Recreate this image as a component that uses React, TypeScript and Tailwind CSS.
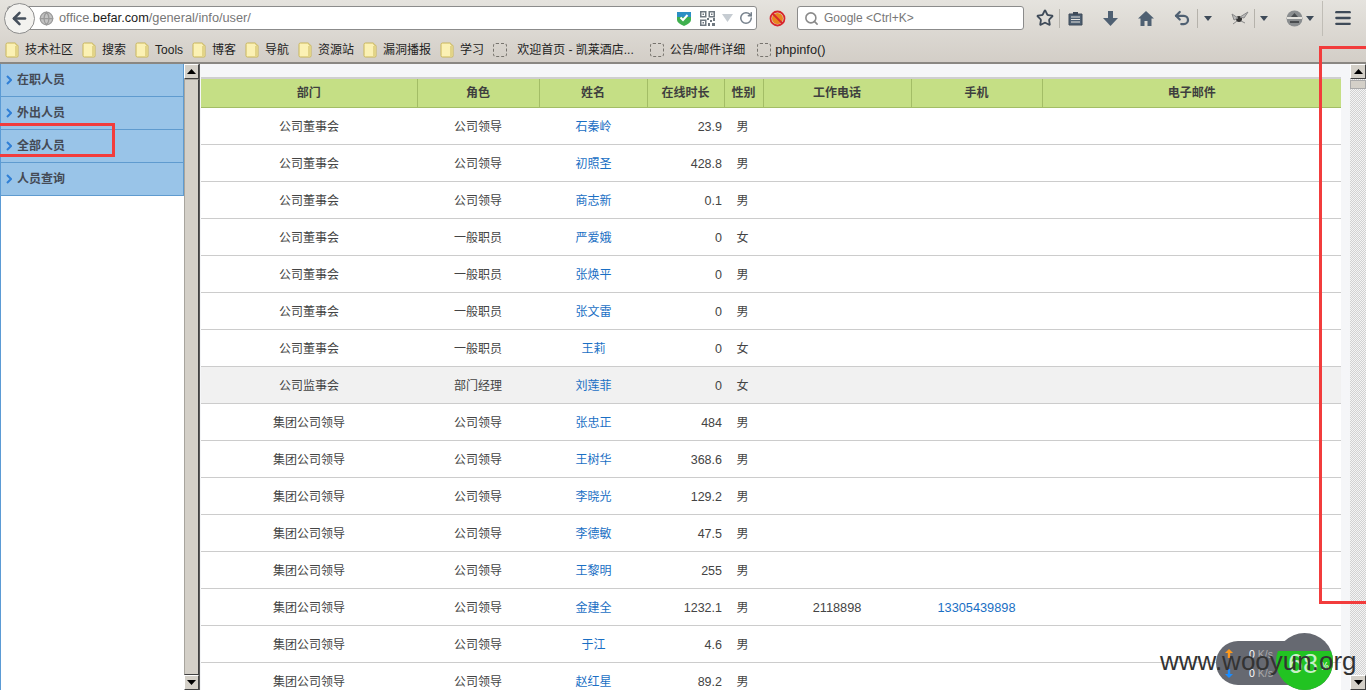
import React from "react";
import { ArrowLeft, Globe, Menu, RotateCw, Search, Star, Undo2 } from "lucide-react";

const bookmarks = ["技术社区", "搜索", "Tools", "博客", "导航", "资源站", "漏洞播报", "学习"];
const pages = ["欢迎首页 - 凯莱酒店...", "公告/邮件详细", "phpinfo()"];
const menu = ["在职人员", "外出人员", "全部人员", "人员查询"];
const heads = ["部门", "角色", "姓名", "在线时长", "性别", "工作电话", "手机", "电子邮件"];

const rows = [
  ["公司董事会", "公司领导", "石秦岭", "23.9", "男"],
  ["公司董事会", "公司领导", "初照圣", "428.8", "男"],
  ["公司董事会", "公司领导", "商志新", "0.1", "男"],
  ["公司董事会", "一般职员", "严爱娥", "0", "女"],
  ["公司董事会", "一般职员", "张焕平", "0", "男"],
  ["公司董事会", "一般职员", "张文雷", "0", "男"],
  ["公司董事会", "一般职员", "王莉", "0", "女"],
  ["公司监事会", "部门经理", "刘莲菲", "0", "女"],
  ["集团公司领导", "公司领导", "张忠正", "484", "男"],
  ["集团公司领导", "公司领导", "王树华", "368.6", "男"],
  ["集团公司领导", "公司领导", "李晓光", "129.2", "男"],
  ["集团公司领导", "公司领导", "李德敏", "47.5", "男"],
  ["集团公司领导", "公司领导", "王黎明", "255", "男"],
  ["集团公司领导", "公司领导", "金建全", "1232.1", "男", "2118898", "13305439898"],
  ["集团公司领导", "公司领导", "于江", "4.6", "男"],
  ["集团公司领导", "公司领导", "赵红星", "89.2", "男"],
];

const Folder = () => (
  <svg width="14" height="16" viewBox="0 0 14 16" className="shrink-0">
    <path d="M1 2.5 Q1 1 2.5 1 H10 Q11 1 11 2.5 V3 H12 Q13 3 13 4 V14 Q13 15 12 15 H2.5 Q1 15 1 13.5 Z" fill="#fbf1b4" stroke="#c9b65a" />
    <path d="M11 4 V14" stroke="#c9b65a" />
  </svg>
);

const Dashed = () => (
  <span className="w-[14px] h-[14px] shrink-0 rounded-[3px] border border-dashed border-[#77746e]" />
);

const Caret = () => (
  <svg width="8" height="5" viewBox="0 0 8 5" className="shrink-0">
    <path d="M0 0 H8 L4 5 Z" fill="#3e4a58" />
  </svg>
);

const Sep = () => <span className="block w-px h-[19px] bg-[#b5b2ab]" />;

const Arrow = ({ down }: { down?: boolean }) => (
  <svg width="9" height="5" viewBox="0 0 9 5">
    <path d={down ? "M0 0 H9 L4.5 5 Z" : "M0 5 H9 L4.5 0 Z"} fill="#000" />
  </svg>
);

const ScrollBtn = ({ down }: { down?: boolean }) => (
  <div className="h-[15px] w-full shrink-0 flex items-center justify-center bg-[#d4d0c8] border-t border-l border-t-white border-l-white border-r border-b border-r-[#404040] border-b-[#404040]">
    <Arrow down={down} />
  </div>
);

function Toolbar() {
  return (
    <div className="h-[36px] flex items-center pl-[4px] pr-[8px]">
      <div className="relative flex items-center w-[750px] h-[24px] ml-[3px] bg-white border border-[#8b8b8b] rounded-[3px]">
        <div className="absolute -left-[4px] -top-[4px] w-[31px] h-[31px] rounded-full bg-[#f3f2ef] border border-[#8d8d8d] flex items-center justify-center">
          <ArrowLeft size={19} strokeWidth={3.2} color="#46505c" />
        </div>
        <Globe size={15} color="#9a9a9a" fill="#c4c4c4" className="ml-[31px]" />
        <span className="ml-[5px] text-[12.75px] text-[#777]">
          office.<span className="text-[#1c1c1c]">befar.com</span>/general/info/user/
        </span>
        <div className="ml-auto flex items-center mr-[3px]">
          <svg width="14" height="15" viewBox="0 0 14 15">
            <path d="M0 1 H14 V9 Q14 12 7 15 Q0 12 0 9 Z" fill="#3fb04f" />
            <path d="M0 1 H14 V6 H0 Z" fill="#2b8fc4" />
            <path d="M3.5 6.5 L6 9 L10.5 4" stroke="#fff" strokeWidth="2" fill="none" />
          </svg>
          <svg width="15" height="15" viewBox="0 0 15 15" className="ml-[9px]">
            <path d="M.75.75h5v5h-5zM9.25.75h5v5h-5zM.75 9.25h5v5h-5z" fill="none" stroke="#6f7880" strokeWidth="1.5" />
            <path d="M2.5 2.5h1.5v1.5H2.5zM11 2.5h1.5v1.5H11zM2.5 11h1.5v1.5H2.5zM7 7h2v2H7zM10 9h2v2h-2zM13 7h2v3h-2zM8 12h2v3H8zM12 12h3v3h-3z" fill="#6f7880" />
          </svg>
          <svg width="11" height="8" viewBox="0 0 11 8" className="ml-[7px]">
            <path d="M0 0 H11 L5.5 8 Z" fill="#c6ccd2" />
          </svg>
          <RotateCw size={14} strokeWidth={2.6} color="#76818c" className="ml-[6px]" />
        </div>
      </div>
      <svg width="17" height="17" viewBox="0 0 17 17" className="ml-[12px]">
        <circle cx="8.5" cy="8.5" r="5.5" fill="#e8861f" />
        <circle cx="8.5" cy="8.5" r="7" fill="none" stroke="#d8262c" strokeWidth="1.8" />
        <path d="M3.5 3.5 L13.5 13.5" stroke="#d8262c" strokeWidth="1.8" />
      </svg>
      <div className="flex items-center ml-[11px] w-[227px] h-[24px] bg-white border border-[#8b8b8b] rounded-[3px] pl-[6px]">
        <Search size={15} strokeWidth={2.5} color="#8a8a8a" />
        <span className="ml-[5px] text-[12px] text-[#777]">Google &lt;Ctrl+K&gt;</span>
      </div>
      <Star size={18} strokeWidth={2.4} color="#3e4a58" className="ml-[12px]" />
      <span className="ml-[5px]"><Sep /></span>
      <svg width="15" height="15" viewBox="0 0 15 15" className="ml-[8px]">
        <path d="M1 3 H14 V14 H1 Z" fill="#4f6072" stroke="#3e4a58" />
        <path d="M5 1 H10 V4 H5 Z" fill="#3e4a58" />
        <path d="M3 6 H12 M3 8.5 H12 M3 11 H12" stroke="#e6e3de" />
      </svg>
      <svg width="15" height="15" viewBox="0 0 15 15" className="ml-[20px]">
        <path d="M5 0 H10 V7 H15 L7.5 15 L0 7 H5 Z" fill="#4f6072" />
      </svg>
      <svg width="16" height="15" viewBox="0 0 16 15" className="ml-[20px]">
        <path d="M8 0 L16 7.5 H13.5 V15 H9.5 V10 H6.5 V15 H2.5 V7.5 H0 Z" fill="#4f6072" />
      </svg>
      <Undo2 size={18} strokeWidth={3} color="#4f6072" className="ml-[19px]" />
      <span className="ml-[6px]"><Sep /></span>
      <span className="ml-[6px]"><Caret /></span>
      <svg width="18" height="14" viewBox="0 0 18 14" className="ml-[19px]">
        <ellipse cx="8" cy="8" rx="3" ry="3" fill="#333" />
        <path d="M9 6 L17 1 L13 7 Z M7 7 L1 3 L3 9 Z M6 10 L2 13 M10 10 L14 12" fill="#bbb" stroke="#888" />
      </svg>
      <span className="ml-[5px]"><Sep /></span>
      <span className="ml-[5px]"><Caret /></span>
      <svg width="17" height="17" viewBox="0 0 17 17" className="ml-[18px]">
        <circle cx="8.5" cy="8.5" r="8" fill="#8a8d8f" />
        <path d="M1 8 H16" stroke="#e4e2dd" strokeWidth="2" />
        <path d="M8.5 3 L12 7 H5 Z" fill="#4a4d50" />
        <path d="M4 11 H13 V13 H4 Z" fill="#4a4d50" />
      </svg>
      <span className="ml-[3px]"><Caret /></span>
      <span className="ml-[8px] w-px h-[35px] bg-[#c0bdb6]" />
      <Menu size={20} strokeWidth={2.8} color="#3e4a58" className="ml-[10px]" />
    </div>
  );
}

function Bookmarks() {
  return (
    <div className="h-[26px] pt-[2px] flex items-center pl-[5px] text-[12px] text-[#222]">
      {bookmarks.map((b) => (
        <div key={b} className="flex items-center gap-[6px] mr-[9px]">
          <Folder />
          <span>{b}</span>
        </div>
      ))}
      <div className="flex items-center gap-[10px] mr-[16px]">
        <Dashed />
        <span>{pages[0]}</span>
      </div>
      <div className="flex items-center gap-[6px] mr-[12px]">
        <Dashed />
        <span>{pages[1]}</span>
      </div>
      <div className="flex items-center gap-[4px]">
        <Dashed />
        <span className="text-[12.75px]">{pages[2]}</span>
      </div>
    </div>
  );
}

function Sidebar() {
  return (
    <div className="w-[184px] shrink-0 h-full bg-white border-l border-[#5b9bd5]">
      {menu.map((m) => (
        <div
          key={m}
          className="h-[33px] flex items-center bg-[#99c4e8] border-b border-[#5f9bcf] border-r text-[12px] font-bold text-[#444a55]"
        >
          <svg width="6" height="10" viewBox="0 0 6 10" className="ml-[5px]">
            <path d="M1 1 L5 5 L1 9" fill="none" stroke="#2f7fd6" strokeWidth="2" />
          </svg>
          <span className="ml-[5px]">{m}</span>
        </div>
      ))}
    </div>
  );
}

function UserTable() {
  return (
    <table className="table-fixed border-collapse ml-[1px] w-[1140px] text-[12px] text-[#444]">
      <colgroup>
        <col className="w-[216px]" />
        <col className="w-[122px]" />
        <col className="w-[108px]" />
        <col className="w-[77px]" />
        <col className="w-[39px]" />
        <col className="w-[148px]" />
        <col className="w-[131px]" />
        <col className="w-[299px]" />
      </colgroup>
      <thead>
        <tr className="h-[29px] bg-[#c5df85] border-t-2 border-t-[#cfcfcf] border-b border-b-[#a3bd66]">
          {heads.map((h, i) => (
            <th key={h} className={`font-bold text-[#3f3f3f] ${i < 7 ? "border-r border-[#a3bd66]" : ""}`}>
              {h}
            </th>
          ))}
        </tr>
      </thead>
      <tbody>
        {rows.map((r, i) => (
          <tr key={r[2]} className={`h-[37px] border-b border-[#cccccc] ${i === 7 ? "bg-[#f1f1f1]" : "bg-white"}`}>
            <td className="text-center pt-[3px]">{r[0]}</td>
            <td className="text-center pt-[3px]">{r[1]}</td>
            <td className="text-center pl-[1px] pt-[3px] text-[#1a6fc4]">{r[2]}</td>
            <td className="text-right pr-[2px] pt-[3px] text-[12.5px]">{r[3]}</td>
            <td className="text-center pr-[2px] pt-[3px]">{r[4]}</td>
            <td className="text-center pt-[3px] text-[12.75px]">{r[5]}</td>
            <td className="text-center pt-[3px] text-[12.75px] text-[#1a6fc4]">{r[6]}</td>
            <td />
          </tr>
        ))}
      </tbody>
    </table>
  );
}

export default function App() {
  return (
    <div className="relative w-[1366px] h-[690px] overflow-hidden flex flex-col bg-[#f5f6f8] font-['Liberation_Sans','Noto_Sans_CJK_SC',sans-serif]">
      <div className="h-[64px] shrink-0 bg-gradient-to-b from-[#e5e3de] to-[#d3cec7] border-b-2 border-[#8a8782]">
        <Toolbar />
        <Bookmarks />
      </div>

      <div className="flex flex-1 min-h-0">
        <Sidebar />
        <div className="w-[16px] shrink-0 h-full flex flex-col bg-[#d4d0c8] border-r border-[#5a5a5a]">
          <ScrollBtn />
          <div className="flex-1 border border-[#a8a59e] border-r-[#404040] border-b-[#404040]" />
          <ScrollBtn down />
        </div>
        <div className="flex-1 min-w-0 h-full overflow-hidden pt-[13px]">
          <UserTable />
        </div>
        <div className="w-[16px] shrink-0 h-full flex flex-col items-center bg-[repeating-conic-gradient(#d2d2d2_0_25%,#f4f4f4_0_50%)] bg-[length:2px_2px]">
          <ScrollBtn />
          <div className="h-[9px] mt-[1px] w-full bg-[#d4d0c8] border border-[#aaa]" />
          <div className="flex-1" />
          <ScrollBtn down />
        </div>
      </div>

      {/* red marks drawn on the screenshot */}
      <div className="absolute left-0 top-[123px] w-[115px] h-[34px] border-[3px] border-l-0 border-[#f23c3c]" />
      <div className="absolute left-[1319px] top-[46px] w-[47px] h-[558px] border-[3px] border-r-0 border-[#f23c3c]" />

      {/* net speed widget */}
      <div className="absolute left-[1216px] top-[641px] w-[100px] h-[44px] rounded-full bg-[#666971] text-[10.5px] leading-[13px] text-white">
        <div className="absolute left-[33px] top-[7px]">0 <span className="text-[#aaa]">K/s</span></div>
        <div className="absolute left-[33px] top-[26px]">0 <span className="text-[#aaa]">K/s</span></div>
        <svg width="8" height="9" viewBox="0 0 8 9" className="absolute left-[9px] top-[8px]">
          <path d="M4 0 L8 4 H5.2 V9 H2.8 V4 H0 Z" fill="#ff9a1a" />
        </svg>
        <svg width="8" height="9" viewBox="0 0 8 9" className="absolute left-[9px] top-[28px]">
          <path d="M4 9 L8 5 H5.2 V0 H2.8 V5 H0 Z" fill="#1a8cff" />
        </svg>
      </div>
      <div className="absolute left-[1276px] top-[633px] w-[57px] h-[57px] rounded-full overflow-hidden bg-[#666971]">
        <div className="absolute left-0 right-0 top-[18px] bottom-0 bg-[#22c322]" />
        <span className="absolute left-[12px] top-[15px] text-[27px] leading-[32px] text-[#c8f0c8]">68</span>
        <span className="absolute left-[44px] top-[26px] text-[10px] text-white">%</span>
      </div>
      <div className="absolute left-[1160px] top-[644px] text-[26px] leading-[34px] text-[#333] font-['Liberation_Sans',sans-serif]">
        www.wooyun.org
      </div>
    </div>
  );
}
